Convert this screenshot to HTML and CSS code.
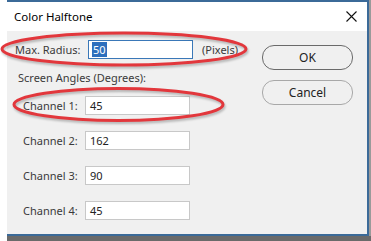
FILE: index.html
```html
<!DOCTYPE html>
<html lang="en">
<head>
    <meta charset="UTF-8">
    <title>Color Halftone</title>
    <link rel="stylesheet" href="styles.css">
</head>
<body>

    <div class="window">
        <div class="titlebar">
            <span class="title">Color Halftone</span>
            <svg class="close" width="11" height="11" viewBox="0 0 11 11">
                <path d="M0.5 0.5 L10.5 10.5 M10.5 0.5 L0.5 10.5" stroke="#111" stroke-width="1.1" fill="none"/>
            </svg>
        </div>

        <div class="content">
            <div class="fields">
                <div class="radius-row">
                    <span class="radius-label">Max. Radius:</span>
                    <div class="field focused"><span class="selected">50</span></div>
                    <span class="unit">(Pixels)</span>
                </div>

                <div class="group-title">Screen Angles (Degrees):</div>

                <div class="channels">
                    <div class="channel-row">
                        <span class="channel-label">Channel 1:</span>
                        <div class="field">45</div>
                    </div>
                    <div class="channel-row">
                        <span class="channel-label">Channel 2:</span>
                        <div class="field">162</div>
                    </div>
                    <div class="channel-row">
                        <span class="channel-label">Channel 3:</span>
                        <div class="field">90</div>
                    </div>
                    <div class="channel-row">
                        <span class="channel-label">Channel 4:</span>
                        <div class="field">45</div>
                    </div>
                </div>
            </div>

            <div class="buttons">
                <div class="btn default">OK</div>
                <div class="btn">Cancel</div>
            </div>
        </div>
    </div>
    <div class="shadow"></div>

    <!-- red annotation circles drawn over the dialog -->
    <svg class="marks" width="371" height="241" viewBox="0 0 371 241">
        <ellipse cx="124" cy="49" rx="122" ry="16" />
        <ellipse cx="118.5" cy="104.5" rx="104.5" ry="16" />
    </svg>

</body>
</html>
```

FILE: styles.css
```css
body {
    margin: 0;
    width: 371px;
    height: 241px;
    overflow: hidden;
    background: #fff;
    font-family: "Noto Sans", "Open Sans", sans-serif;
    position: relative;
}

.window {
    margin-left: 7px;
    width: 360px;
    border-top: 2px solid #3b6a98;
    border-right: 2px solid #3b6a98;
    border-bottom: 2px solid #3b6a98;
    box-shadow: 2px 0 0 #9a9a9a;
}

.titlebar {
    height: 29px;
    background: #fff;
    display: flex;
    align-items: center;
    justify-content: space-between;
    padding-left: 7px;
    padding-right: 10px;
}
.title { font-size: 11.5px; color: #000; line-height: 14px; }
.close { display: block; }

.content {
    height: 203px;
    box-sizing: border-box;
    background: #f0f0f0;
    display: flex;
    padding: 9px 0 0 8px;
    font-size: 11px;
    color: #3a3a3a;
}

.fields { width: 247px; }

.field {
    box-sizing: border-box;
    width: 105px;
    height: 19px;
    background: #fff;
    border: 1px solid #c8c8c8;
    padding-left: 4px;
    line-height: 17px;
    color: #222;
}
.field.focused { border-color: #3a78b8; padding-left: 3px; }
.selected { background: #2d6fbd; color: #fff; padding: 0 1px; }

.radius-row { display: flex; align-items: center; height: 19px; }
.radius-label { width: 73px; }
.unit { margin-left: 9px; }

.group-title {
    margin-top: 12px;
    padding-left: 3px;
    line-height: 14px;
}

.channels {
    margin-top: 11px;
    display: flex;
    flex-direction: column;
    gap: 16px;
}
.channel-row { display: flex; align-items: center; height: 19px; }
.channel-label { width: 62px; padding-left: 8px; }

.buttons {
    padding-top: 5px;
    display: flex;
    flex-direction: column;
    gap: 10px;
}
.btn {
    box-sizing: border-box;
    width: 91px;
    height: 25px;
    border: 1px solid #a8a8a8;
    border-radius: 12px;
    text-align: center;
    line-height: 23px;
    font-size: 12px;
    color: #222;
}
.btn.default { border-color: #6a6a6a; }

.shadow {
    margin-left: 7px;
    height: 5px;
    background: #6a6a6a;
}

.marks {
    position: absolute;
    left: 0;
    top: 0;
    fill: none;
    stroke: #e2373c;
    stroke-width: 3;
    filter: drop-shadow(1px 2px 1px rgba(0, 0, 0, 0.25));
}
```
